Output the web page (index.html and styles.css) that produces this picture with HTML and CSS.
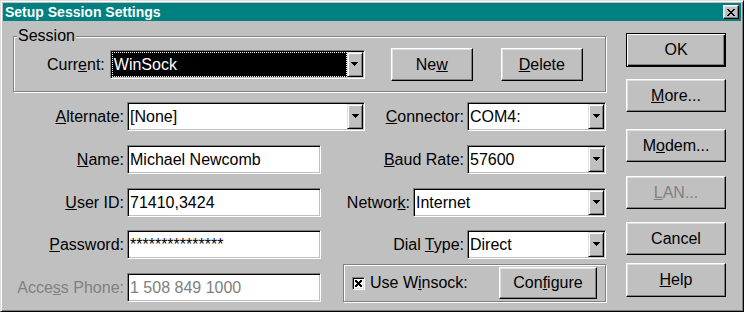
FILE: index.html
```html
<!DOCTYPE html>
<html lang="en">
<head>
  <meta charset="UTF-8">
  <title>Setup Session Settings</title>
  <link rel="stylesheet" href="styles.css">
</head>
<body>

  <!-- dialog window -->
  <div class="window">
    <div class="title-bar">
      <span class="title-text">Setup Session Settings</span>
      <button class="close-button" aria-label="Close">
        <svg width="8" height="7" viewBox="0 0 8 7" shape-rendering="crispEdges"><path d="M0 0h2v1H0zM6 0h2v1H6zM1 1h2v1H1zM5 1h2v1H5zM2 2h4v1H2zM3 3h2v1H3zM2 4h4v1H2zM1 5h2v1H1zM5 5h2v1H5zM0 6h2v1H0zM6 6h2v1H6z"/></svg>
      </button>
    </div>

    <div class="dialog-body">
      <div class="main">

        <!-- session group -->
        <div class="group session-group">
          <div class="group-title">Session</div>
          <div class="session-row">
            <span class="session-label">Curr<u>e</u>nt:</span>
            <div class="combo combo-current">
              <div class="combo-value selected">WinSock</div>
              <div class="combo-arrow"><svg width="7" height="4" viewBox="0 0 7 4" shape-rendering="crispEdges"><path d="M0 0h7v1H0zM1 1h5v1H1zM2 2h3v1H2zM3 3h1v1H3z"/></svg></div>
            </div>
            <button class="btn btn-new">Ne<u>w</u></button>
            <button class="btn btn-delete"><u>D</u>elete</button>
          </div>
        </div>

        <!-- field rows -->
        <div class="fields">
          <div class="row">
            <div class="pair-left">
              <span class="field-label"><u>A</u>lternate:</span>
              <div class="combo combo-wide">
                <div class="combo-value">[None]</div>
                <div class="combo-arrow"><svg width="7" height="4" viewBox="0 0 7 4" shape-rendering="crispEdges"><path d="M0 0h7v1H0zM1 1h5v1H1zM2 2h3v1H2zM3 3h1v1H3z"/></svg></div>
              </div>
            </div>
            <div class="pair-right">
              <span class="field-label"><u>C</u>onnector:</span>
              <div class="combo combo-short">
                <div class="combo-value">COM4:</div>
                <div class="combo-arrow"><svg width="7" height="4" viewBox="0 0 7 4" shape-rendering="crispEdges"><path d="M0 0h7v1H0zM1 1h5v1H1zM2 2h3v1H2zM3 3h1v1H3z"/></svg></div>
              </div>
            </div>
          </div>

          <div class="row">
            <div class="pair-left">
              <span class="field-label"><u>N</u>ame:</span>
              <div class="edit">Michael Newcomb</div>
            </div>
            <div class="pair-right">
              <span class="field-label"><u>B</u>aud Rate:</span>
              <div class="combo combo-short">
                <div class="combo-value">57600</div>
                <div class="combo-arrow"><svg width="7" height="4" viewBox="0 0 7 4" shape-rendering="crispEdges"><path d="M0 0h7v1H0zM1 1h5v1H1zM2 2h3v1H2zM3 3h1v1H3z"/></svg></div>
              </div>
            </div>
          </div>

          <div class="row row-short">
            <div class="pair-left">
              <span class="field-label"><u>U</u>ser ID:</span>
              <div class="edit">71410,3424</div>
            </div>
            <div class="pair-right">
              <span class="field-label">Networ<u>k</u>:</span>
              <div class="combo combo-network">
                <div class="combo-value">Internet</div>
                <div class="combo-arrow"><svg width="7" height="4" viewBox="0 0 7 4" shape-rendering="crispEdges"><path d="M0 0h7v1H0zM1 1h5v1H1zM2 2h3v1H2zM3 3h1v1H3z"/></svg></div>
              </div>
            </div>
          </div>

          <div class="row">
            <div class="pair-left">
              <span class="field-label"><u>P</u>assword:</span>
              <div class="edit">***************</div>
            </div>
            <div class="pair-right">
              <span class="field-label">Dial <u>T</u>ype:</span>
              <div class="combo combo-short">
                <div class="combo-value">Direct</div>
                <div class="combo-arrow"><svg width="7" height="4" viewBox="0 0 7 4" shape-rendering="crispEdges"><path d="M0 0h7v1H0zM1 1h5v1H1zM2 2h3v1H2zM3 3h1v1H3z"/></svg></div>
              </div>
            </div>
          </div>

          <div class="row row-last">
            <div class="pair-left">
              <span class="field-label disabled">Acce<u>s</u>s Phone:</span>
              <div class="edit disabled">1 508 849 1000</div>
            </div>
            <div class="pair-right">
              <div class="group winsock-group">
                <span class="checkbox">
                  <svg width="7" height="7" viewBox="0 0 7 7" shape-rendering="crispEdges"><path d="M0 0h2v1H0zM5 0h2v1H5zM0 1h3v1H0zM4 1h3v1H4zM1 2h5v1H1zM2 3h3v1H2zM1 4h5v1H1zM0 5h3v1H0zM4 5h3v1H4zM0 6h2v1H0zM5 6h2v1H5z"/></svg>
                </span>
                <span class="check-label">Use W<u>i</u>nsock:</span>
                <button class="btn btn-configure">Con<u>f</u>igure</button>
              </div>
            </div>
          </div>
        </div>
      </div>

      <!-- command buttons -->
      <div class="buttons">
        <button class="btn btn-default btn-ok">OK</button>
        <button class="btn btn-more"><u>M</u>ore...</button>
        <button class="btn btn-modem">M<u>o</u>dem...</button>
        <button class="btn btn-lan disabled"><u>L</u>AN...</button>
        <button class="btn btn-cancel">Cancel</button>
        <button class="btn btn-help"><u>H</u>elp</button>
      </div>
    </div>
  </div>

</body>
</html>
```

FILE: styles.css
```css
/* page */
body {
  margin: 0;
  background-color: #c0c0c0;
  font-family: "Liberation Sans", Arial, sans-serif;
  font-size: 16px;
  color: #000;
}

/* window frame */
.window {
  width: 744px;
  height: 312px;
  box-sizing: border-box;
  padding: 2px;
  background-color: #c0c0c0;
  border: 1px solid;
  border-color: #dfdfdf #000 #000 #dfdfdf;
  box-shadow: inset 1px 1px #fff, inset -1px -1px #808080;
}

/* title bar */
.title-bar {
  height: 18px;
  display: flex;
  align-items: center;
  justify-content: space-between;
  padding: 0 2px;
  background-color: #008080;
  color: #fff;
  font-size: 14px;
  font-weight: bold;
}

.close-button {
  width: 16px;
  height: 14px;
  padding: 0;
  display: flex;
  align-items: center;
  justify-content: center;
  background-color: #c0c0c0;
  border: 1px solid;
  border-color: #fff #000 #000 #fff;
  box-shadow: inset -1px -1px #808080, inset 1px 1px #dfdfdf;
}

/* body layout */
.dialog-body {
  display: flex;
  padding: 0 15px 0 10px;
}

.main {
  width: 593px;
  padding-top: 15px;
}

/* etched group box */
.group {
  box-sizing: border-box;
  border: 1px solid #808080;
  box-shadow: inset 1px 1px #fff, 1px 1px #fff;
}

.session-group {
  height: 56px;
}

.group-title {
  width: fit-content;
  margin: -10px 0 0 3px;
  padding: 0 1px;
  line-height: 18px;
  background-color: #c0c0c0;
}

.session-row {
  display: flex;
  align-items: center;
  height: 33px;
  margin-top: 3px;
  padding-left: 33px;
}

.session-label {
  margin-right: 5px;
}

/* buttons */
.btn {
  box-sizing: border-box;
  padding: 0;
  font: inherit;
  color: #000;
  background-color: #c0c0c0;
  border: 1px solid;
  border-color: #fff #000 #000 #fff;
  box-shadow: inset -1px -1px #808080, inset 1px 1px #dfdfdf;
}

.btn-default {
  border-color: #000;
  box-shadow: inset 1px 1px #fff, inset -1px -1px #000, inset -2px -2px #808080;
}

.btn-new, .btn-delete {
  width: 82px;
  height: 33px;
}

.btn-new {
  margin-left: 26px;
}

.btn-delete {
  margin-left: 28px;
}

.disabled {
  color: #808080;
}

/* combo boxes and edits */
.combo, .edit {
  box-sizing: border-box;
  height: 29px;
  background-color: #fff;
  border: 1px solid;
  border-color: #808080 #fff #fff #808080;
  box-shadow: inset 1px 1px #000, inset -1px -1px #c0c0c0;
}

.combo {
  display: flex;
  padding: 1px;
}

.combo-value {
  flex: 1;
  padding-left: 1px;
  line-height: 25px;
  white-space: nowrap;
}

.combo-value.selected {
  background-color: #000;
  color: #fff;
  outline: 1px dotted #fff;
  outline-offset: -1px;
  padding-left: 2px;
}

.combo-arrow {
  width: 16px;
  box-sizing: border-box;
  display: flex;
  align-items: center;
  justify-content: center;
  padding-bottom: 1px;
  background-color: #c0c0c0;
  border: 1px solid;
  border-color: #dfdfdf #000 #000 #dfdfdf;
  box-shadow: inset 1px 1px #fff, inset -1px -1px #808080;
}

.combo-current {
  width: 255px;
}

.combo-wide {
  width: 238px;
}

.combo-short {
  width: 139px;
}

.combo-network {
  width: 193px;
}

.edit {
  width: 194px;
  padding: 1px 1px 1px 2px;
  line-height: 25px;
  white-space: nowrap;
}

/* field rows */
.fields {
  margin-top: 10px;
}

.row {
  display: flex;
  height: 43px;
}

.row-short {
  height: 42px;
}

.row-last {
  height: auto;
}

.pair-left {
  width: 352px;
  display: flex;
  align-items: flex-start;
}

.pair-left .field-label {
  width: 111px;
  margin-right: 3px;
  text-align: right;
}

.pair-right {
  flex: 1;
  display: flex;
  align-items: flex-start;
  justify-content: flex-end;
}

.pair-right .field-label {
  margin-right: 3px;
}

.field-label {
  line-height: 29px;
  white-space: nowrap;
}

/* winsock group */
.winsock-group {
  width: 263px;
  height: 38px;
  margin-top: -9px;
  display: flex;
  align-items: center;
  padding: 0 8px;
}

.checkbox {
  width: 13px;
  height: 13px;
  box-sizing: border-box;
  display: flex;
  align-items: center;
  justify-content: center;
  background-color: #fff;
  border: 1px solid;
  border-color: #808080 #fff #fff #808080;
  box-shadow: inset 1px 1px #000, inset -1px -1px #dfdfdf;
}

.check-label {
  margin-left: 5px;
}

.btn-configure {
  width: 98px;
  height: 32px;
  margin-left: auto;
}

/* right column */
.buttons {
  width: 100px;
  margin-left: 20px;
  padding-top: 12px;
  display: flex;
  flex-direction: column;
}

.buttons .btn {
  width: 100px;
  height: 33px;
}

.buttons .btn-ok {
  height: 34px;
}

.btn-more {
  margin-top: 12px;
}

.btn-modem {
  margin-top: 17px;
}

.btn-lan {
  margin-top: 14px;
}

.btn-cancel {
  margin-top: 13px;
}

.buttons .btn-help {
  margin-top: 8px;
  height: 34px;
}
```
